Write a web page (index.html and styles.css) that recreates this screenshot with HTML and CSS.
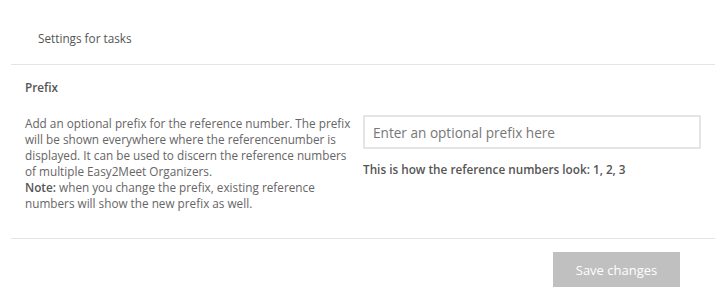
FILE: index.html
```html
<!DOCTYPE html>
<html>
<head>
<meta charset="utf-8">
<link rel="stylesheet" href="styles.css">
</head>
<body>
<div class="page">
  <div class="header">Settings for tasks</div>
  <div class="section">
    <div class="label">Prefix</div>
    <div class="row">
      <div class="col-left">
        <p class="desc">Add an optional prefix for the reference number. The prefix will be shown everywhere where the referencenumber is displayed. It can be used to discern the reference numbers of multiple Easy2Meet Organizers.<br><strong>Note:</strong> when you change the prefix, existing reference numbers will show the new prefix as well.</p>
      </div>
      <div class="col-right">
        <input class="input" type="text" placeholder="Enter an optional prefix here">
        <div class="hint">This is how the reference numbers look: 1, 2, 3</div>
      </div>
    </div>
  </div>
  <div class="footer">
    <button class="btn" type="button">Save changes</button>
  </div>
</div>
</body>
</html>
```
FILE: styles.css
```css
* { box-sizing: border-box; }
html, body { margin: 0; padding: 0; background: #fff; }
body {
  font-family: "Open Sans", "Liberation Sans", sans-serif;
  font-size: 11.75px;
  line-height: 16px;
  color: #666;
}
.page {
  margin: 0 4px 0 11px;
}
.header {
  padding: 30px 0 18px 27px;
  color: #555;
}
.section {
  border-top: 1px solid #e5e5e5;
  border-bottom: 1px solid #e5e5e5;
  padding: 14px 14px 27px 14px;
}
.label {
  font-weight: 600;
  color: #555;
  margin-bottom: 20px;
}
.row {
  display: flex;
}
.col-left {
  width: 338px;
  padding-right: 8px;
}
.col-right {
  width: 338px;
}
.desc {
  margin: 0;
}
.desc strong {
  display: inline-block;
  font-weight: 600;
  color: #555;
}
.input {
  display: block;
  width: 100%;
  height: 34px;
  border: 2px solid #e5e5e5;
  padding: 0 8px;
  font-family: "Open Sans", "Liberation Sans", sans-serif;
  font-size: 13.6px;
  color: #555;
  outline: none;
}
.input::placeholder { color: #777; }
.hint {
  margin-top: 12px;
  font-weight: 600;
  color: #555;
}
.footer {
  display: flex;
  justify-content: flex-end;
  padding: 13px 35px 0 0;
}
.btn {
  width: 127px;
  height: 35px;
  border: none;
  background: #c0c0c0;
  color: #fff;
  font-family: "Open Sans", "Liberation Sans", sans-serif;
  font-size: 13px;
  padding: 0;
}
```
